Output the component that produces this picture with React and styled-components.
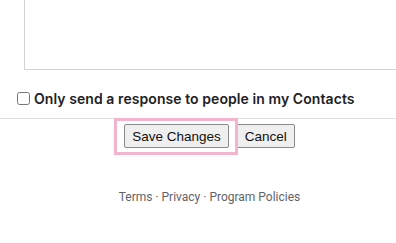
import React from "react";
import styled, { createGlobalStyle } from "styled-components";

const GlobalStyle = createGlobalStyle`
  html, body {
    margin: 0;
    padding: 0;
    background: #ffffff;
  }
  html {
    overflow: hidden;
  }
`;

const Page = styled.div`
  width: 419px;
  display: flex;
  flex-direction: column;
`;

const MessageFrame = styled.div`
  box-sizing: border-box;
  width: 396px;
  padding-left: 24px;
  margin-top: -20px;
  overflow: hidden;
`;

const MessageBox = styled.div`
  box-sizing: border-box;
  width: 440px;
  height: 90px;
  border-left: 1px solid #d4d4d4;
  border-bottom: 1px solid #d4d4d4;
  background: #fff;
`;

const OptionRow = styled.label`
  display: flex;
  align-items: center;
  margin: 18px 0 0 13px;
  font-family: Inter, Roboto, "Liberation Sans", sans-serif;
  font-weight: 600;
  font-size: 14px;
  letter-spacing: 0.07px;
  color: #202124;
  height: 20px;
`;

const Check = styled.input`
  width: 13px;
  height: 13px;
  margin: 0 4px 0 4px;
`;

const Divider = styled.hr`
  border: 0;
  border-top: 1px solid #e0e0e0;
  margin: 10px 0 0 0;
  width: 100%;
`;

const Actions = styled.div`
  display: flex;
  justify-content: center;
  gap: 8px;
  margin-top: 5px;
`;

const Highlight = styled.span`
  position: relative;
  display: inline-flex;
  &::after {
    content: "";
    position: absolute;
    top: -6px;
    left: -10px;
    right: -9px;
    bottom: -7px;
    border: 3px solid #f3b5ce;
    pointer-events: none;
  }
`;

const Button = styled.button`
  box-sizing: border-box;
  height: 24px;
  padding: 0 7px;
  font-family: "Liberation Sans", Arial, sans-serif;
  font-size: 13.5px;
  color: #111;
  background: #efefef;
  border: 1px solid #8a8a8a;
  border-radius: 2px;
`;

const Footer = styled.div`
  margin-top: 42px;
  text-align: center;
  font-family: Roboto, "Liberation Sans", sans-serif;
  font-size: 12px;
  color: #5f6368;
`;

export default function App() {
  return (
    <>
      <GlobalStyle />
      <Page>
        <MessageFrame>
          <MessageBox role="textbox" aria-multiline="true" />
        </MessageFrame>
        <OptionRow>
          <Check type="checkbox" />
          Only send a response to people in my Contacts
        </OptionRow>
        <Divider />
        <Actions>
          <Highlight>
            <Button>Save Changes</Button>
          </Highlight>
          <Button>Cancel</Button>
        </Actions>
        <Footer>Terms · Privacy · Program Policies</Footer>
      </Page>
    </>
  );
}
